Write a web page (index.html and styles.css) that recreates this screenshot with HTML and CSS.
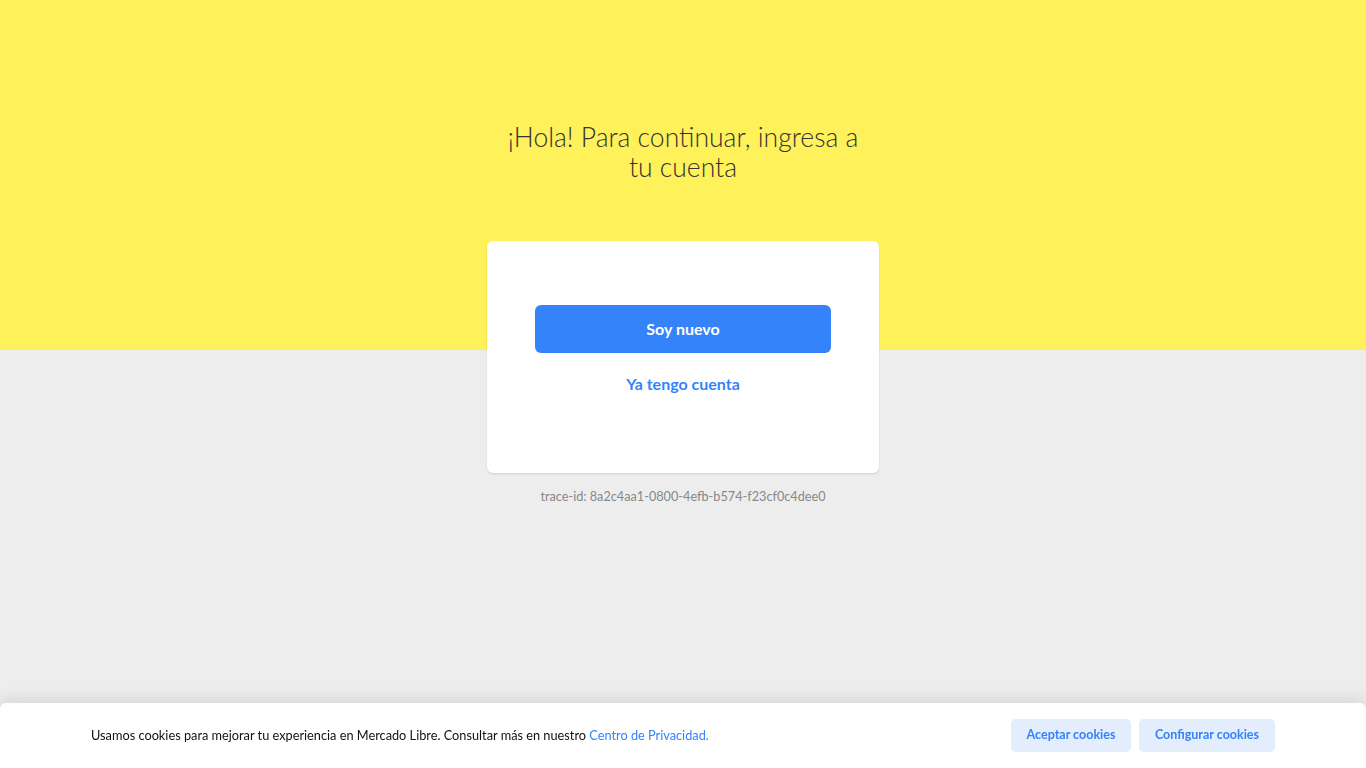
FILE: index.html
```html
<!DOCTYPE html>
<html lang="es">
<head>
<meta charset="utf-8">
<title>Mercado Libre</title>
<link rel="stylesheet" href="styles.css">
</head>
<body>
<div class="page">
  <header class="hero">
    <h1 class="title">¡Hola! Para continuar, ingresa a tu cuenta</h1>
  </header>
  <main class="content">
    <section class="card">
      <a class="btn-primary" href="#">Soy nuevo</a>
      <a class="btn-link" href="#">Ya tengo cuenta</a>
    </section>
    <p class="trace">trace-id: 8a2c4aa1-0800-4efb-b574-f23cf0c4dee0</p>
  </main>
</div>
<div class="cookies">
  <p class="cookies-text">Usamos cookies para mejorar tu experiencia en Mercado Libre. Consultar más en nuestro <a href="#">Centro de Privacidad.</a></p>
  <div class="cookies-actions">
    <button class="cookie-btn cookie-accept">Aceptar cookies</button>
    <button class="cookie-btn cookie-config">Configurar cookies</button>
  </div>
</div>
</body>
</html>
```
FILE: styles.css
```css
* { box-sizing: border-box; }
html, body { margin: 0; padding: 0; height: 100%; }
body {
  font-family: "Lato", "Open Sans", "Liberation Sans", sans-serif;
  background: #ededed;
  color: #333;
  overflow: hidden;
}
.page { position: relative; }
.hero {
  background: #fff159;
  height: 350px;
  display: flex;
  justify-content: center;
  padding-top: 122px;
}
.title {
  margin: 0;
  width: 370px;
  text-align: center;
  font-weight: 300;
  font-size: 26.5px;
  line-height: 30px;
  color: #333;
}
.content {
  display: flex;
  flex-direction: column;
  align-items: center;
  margin-top: -109px;
}
.card {
  width: 392px;
  height: 232px;
  background: #fff;
  border-radius: 6px;
  box-shadow: 0 1px 2px rgba(0,0,0,.12);
  display: flex;
  flex-direction: column;
  align-items: center;
  padding-top: 64px;
}
.btn-primary {
  width: 296px;
  height: 48px;
  border-radius: 6px;
  background: #3483fa;
  color: #fff;
  font-weight: 700;
  font-size: 16px;
  display: flex;
  align-items: center;
  justify-content: center;
  padding-bottom: 2px;
  text-decoration: none;
}
.btn-link {
  margin-top: 19px;
  height: 24px;
  line-height: 24px;
  color: #3483fa;
  font-weight: 700;
  font-size: 16px;
  text-decoration: none;
}
.trace {
  margin: 15px 0 0;
  font-size: 12.7px;
  line-height: 16px;
  color: #888;
}
.cookies {
  position: fixed;
  left: 0;
  right: 0;
  bottom: 0;
  height: 65px;
  background: #fff;
  border-radius: 6px 6px 0 0;
  box-shadow: 0 -4px 16px rgba(0,0,0,.1);
  display: flex;
  align-items: center;
  justify-content: space-between;
  padding: 0 91px 1px;
}
.cookies-text {
  margin: 0;
  font-size: 12.75px;
  color: #111;
}
.cookies-text a { color: #3483fa; text-decoration: none; }
.cookies-actions { display: flex; gap: 8px; }
.cookie-btn {
  height: 33px;
  border: 0;
  border-radius: 5px;
  background: #e3edfb;
  color: #3483fa;
  font-family: inherit;
  font-weight: 700;
  font-size: 12.5px;
  padding: 0 0 2px;
  white-space: nowrap;
  display: flex;
  align-items: center;
  justify-content: center;
}
.cookie-accept { width: 120px; }
.cookie-config { width: 136px; }
```
